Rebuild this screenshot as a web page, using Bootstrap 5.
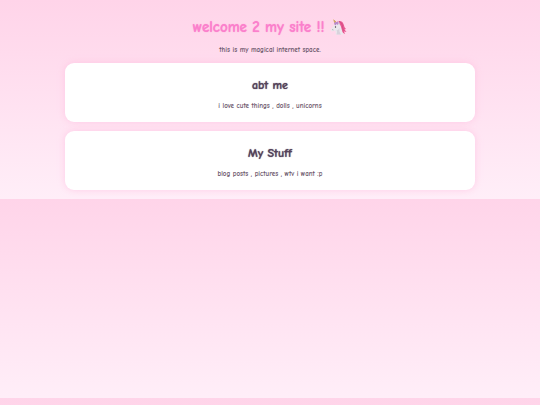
<!DOCTYPE html>
<html lang="en">
<head>
<meta charset="utf-8">
<meta name="viewport" content="width=device-width, initial-scale=1">
<title>my site</title>
<link href="https://cdn.jsdelivr.net/npm/bootstrap@5.3.0/dist/css/bootstrap.min.css" rel="stylesheet">
<style>
body {
  background: linear-gradient(#ffd4e9, #ffeef8);
  color: #6b566a;
  font-family: "Comic Sans MS", "Comic Neue", "Noto Sans", sans-serif;
  font-size: 7px;
  font-weight: 700;
  line-height: 10px;
}
.site-title { color: #fb80cc; font-size: 15px; line-height: 22px; gap: 6px; text-shadow: 0 0 1px currentColor; }
.unicorn { width: 17px; height: 17px; }
.intro { margin-top: 7px; margin-bottom: 8px; }
.sections { width: 76%; gap: 9px; padding-bottom: 9px; }
.panel {
  --bs-card-border-width: 0;
  --bs-card-border-radius: 9px;
  --bs-card-bg: #fff;
  color: #6b566a;
  padding: 15px 12px 11px;
  box-shadow: 0 0 7px #ffb8dc99;
}
.panel-title { color: #54425a; font-size: 12px; line-height: 15px; margin-bottom: 8px; text-shadow: 0 0 1px currentColor; }
</style>
</head>
<body>
<header class="text-center pt-3">
  <h1 class="site-title fw-bold d-flex justify-content-center align-items-center mb-0">
    <span>welcome 2 my site !!</span>
    <svg class="unicorn" viewBox="0 0 34 34" role="img" aria-label="unicorn">
      <path d="M13 7C18 2 25 4 27 10c2 4 1 7 5 10l-3 1 4 5-5-1 2 5c-7-3-10-7-12-13L12 10z" fill="#e95891"/>
      <path d="M18 5c6 2 7 7 7 11s2 6 4 8" fill="none" stroke="#cc4a83" stroke-width="1.5"/>
      <path d="M8 12c3-6 9-5 12-1 3 5 3 11 7 20H11c1-4 1-6-1-8l-5 2c-3 0-4-2-3-5l5-6z" fill="#ebe7ed"/>
      <path d="M13 23c3-1 5-3 6-6-1 6 0 10 3 14h-9c1-4 2-6 0-8z" fill="#d8d2dc"/>
      <path d="M10 10 6 0l8 7z" fill="#ddb35c"/>
      <path d="m7 4 3-1M8 7l4-2" stroke="#a98562"/>
      <path d="m15 10 2-7 3 8z" fill="#d9cedd"/>
      <path d="M8 10c1-4 5-5 9-3l-1 5-3-2-2 3z" fill="#b98acb"/>
      <circle cx="11" cy="16" r="1.3" fill="#443846"/>
      <path d="m4 21 3 1" stroke="#8b7f8d"/>
    </svg>
  </h1>
  <p class="intro">this is my magical internet space.</p>
</header>
<main class="sections d-flex flex-column mx-auto text-center">
  <section class="card panel">
    <h2 class="panel-title fw-bold">abt me</h2>
    <p class="mb-0">i love cute things , dolls , unicorns</p>
  </section>
  <section class="card panel">
    <h2 class="panel-title fw-bold">My Stuff</h2>
    <p class="mb-0">blog posts , pictures , wtv i want :p</p>
  </section>
</main>
<script src="https://cdn.jsdelivr.net/npm/bootstrap@5.3.0/dist/js/bootstrap.bundle.min.js"></script>
</body>
</html>
